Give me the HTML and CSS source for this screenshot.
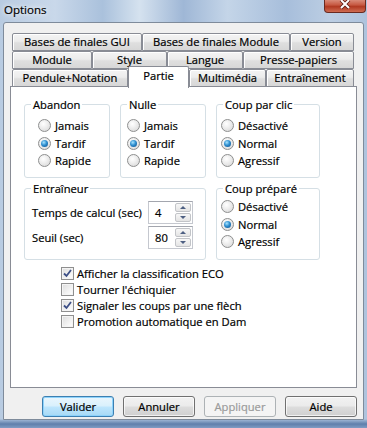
FILE: index.html
```html
<!DOCTYPE html>
<html lang="fr">
<head>
    <meta charset="UTF-8">
    <title>Options</title>
    <link rel="stylesheet" href="styles.css">
</head>
<body>
<div class="window">
    <div class="titlebar">
        <span class="title">Options</span>
        <div class="close">
            <svg width="14" height="10" viewBox="0 0 14 10">
                <path d="M3 0 L11 8 M11 0 L3 8" stroke="#5a1a12" stroke-width="3.6"/>
                <path d="M3 0 L11 8 M11 0 L3 8" stroke="#fff" stroke-width="2"/>
            </svg>
        </div>
    </div>

    <div class="client">
        <div class="tabs">
            <div class="tab-row">
                <div class="tab gui">Bases de finales GUI</div>
                <div class="tab mod-bases">Bases de finales Module</div>
                <div class="tab version">Version</div>
            </div>
            <div class="tab-row">
                <div class="tab module">Module</div>
                <div class="tab style">Style</div>
                <div class="tab langue">Langue</div>
                <div class="tab presse">Presse-papiers</div>
            </div>
            <div class="tab-row last">
                <div class="tab pendule">Pendule+Notation</div>
                <div class="tab partie active">Partie</div>
                <div class="tab multi">Multimédia</div>
                <div class="tab entr">Entraînement</div>
            </div>
        </div>

        <div class="panel">
            <div class="groups">
                <fieldset class="group abandon">
                    <legend>Abandon</legend>
                    <div class="opts">
                        <div class="opt"><span class="radio"></span>Jamais</div>
                        <div class="opt"><span class="radio on"></span>Tardif</div>
                        <div class="opt"><span class="radio"></span>Rapide</div>
                    </div>
                </fieldset>
                <fieldset class="group nulle">
                    <legend>Nulle</legend>
                    <div class="opts">
                        <div class="opt"><span class="radio"></span>Jamais</div>
                        <div class="opt"><span class="radio on"></span>Tardif</div>
                        <div class="opt"><span class="radio"></span>Rapide</div>
                    </div>
                </fieldset>
                <fieldset class="group clic">
                    <legend>Coup par clic</legend>
                    <div class="opts">
                        <div class="opt"><span class="radio"></span>Désactivé</div>
                        <div class="opt"><span class="radio on"></span>Normal</div>
                        <div class="opt"><span class="radio"></span>Agressif</div>
                    </div>
                </fieldset>

                <fieldset class="group trainer">
                    <legend>Entraîneur</legend>
                    <div class="train">
                        <span>Temps de calcul (sec)</span>
                        <div class="spin">
                            <span class="val">4</span>
                            <span class="arrows"><span class="up"></span><span class="down"></span></span>
                        </div>
                        <span>Seuil (sec)</span>
                        <div class="spin">
                            <span class="val">80</span>
                            <span class="arrows"><span class="up"></span><span class="down"></span></span>
                        </div>
                    </div>
                </fieldset>
                <fieldset class="group prepare">
                    <legend>Coup préparé</legend>
                    <div class="opts">
                        <div class="opt"><span class="radio"></span>Désactivé</div>
                        <div class="opt"><span class="radio on"></span>Normal</div>
                        <div class="opt"><span class="radio"></span>Agressif</div>
                    </div>
                </fieldset>
            </div>

            <div class="checks">
                <div class="chk"><span class="box on"><svg width="11" height="11" viewBox="0 0 11 11"><path d="M2 5.5 L4.5 8 L9 2" fill="none" stroke="#3d4f86" stroke-width="1.8"/></svg></span>Afficher la classification ECO</div>
                <div class="chk"><span class="box"></span>Tourner l'échiquier</div>
                <div class="chk"><span class="box on"><svg width="11" height="11" viewBox="0 0 11 11"><path d="M2 5.5 L4.5 8 L9 2" fill="none" stroke="#3d4f86" stroke-width="1.8"/></svg></span>Signaler les coups par une flèch</div>
                <div class="chk"><span class="box"></span>Promotion automatique en Dam</div>
            </div>
        </div>

        <div class="buttons">
            <button class="btn default">Valider</button>
            <button class="btn">Annuler</button>
            <button class="btn" disabled>Appliquer</button>
            <button class="btn">Aide</button>
        </div>
    </div>
</div>
</body>
</html>
```

FILE: styles.css
```css
body {
    margin: 0;
    width: 367px;
    height: 428px;
    overflow: hidden;
    font-family: "Open Sans", sans-serif;
    font-size: 11.2px;
    color: #000;
    -webkit-text-stroke: 0.2px currentColor;
}
.window {
    height: 428px;
    box-sizing: border-box;
    padding: 0 3px 8px;
    display: flex;
    flex-direction: column;
    background:
        linear-gradient(to bottom, transparent 419px, #9bb3d2 420px, #5f7fab 424px, #7f9cc4 428px),
        linear-gradient(90deg, #b8cbe1 0%, #c9d8ea 15%, #aac1dc 28%, #d5e2ef 38%, #9fb7d6 50%, #c4d5e8 62%, #a7bedb 78%, #bccee3 90%, #aec3dd 100%);
}
.titlebar {
    height: 22px;
    display: flex;
    justify-content: space-between;
    align-items: flex-start;
}
.title {
    padding: 2px 0 0 1px;
    line-height: 15px;
    font-size: 11.5px;
    text-shadow: 0 0 5px #fff, 0 0 8px rgba(255, 255, 255, 0.8);
}
.close {
    width: 42px;
    height: 13px;
    margin-right: -2px;
    box-sizing: border-box;
    border: 1px solid #6a2a20;
    border-top: none;
    border-radius: 0 0 4px 4px;
    background: linear-gradient(#d98a78, #c75a43 40%, #b13a22 55%, #cf6c52);
    display: flex;
    justify-content: center;
    align-items: flex-start;
}
.client {
    flex: 1;
    background: #f0f0f0;
    border: 1px solid #7e8b9b;
    border-radius: 3px 3px 0 0;
    padding: 10px 6px 0;
}

/* onglets */
.tabs {
    margin: 0 2px;
}
.tab-row {
    display: flex;
}
.tab-row.last {
    margin-bottom: -1px;
}
.tab {
    box-sizing: border-box;
    height: 18px;
    border: 1px solid #898c95;
    border-radius: 2px 2px 0 0;
    background: linear-gradient(#f4f4f4, #ececec 45%, #dfdfdf 55%, #d7d7d7);
    box-shadow: inset 1px 1px 0 #fff;
    text-align: center;
    line-height: 16px;
    white-space: nowrap;
}
.tab.active {
    position: relative;
    z-index: 1;
    height: 22px;
    margin-top: -3px;
    margin-bottom: -1px;
    border-bottom: none;
    background: #fff;
    box-shadow: none;
    line-height: 17px;
}
.gui { width: 130px; }
.mod-bases { width: 148px; }
.version { width: 64px; }
.module { width: 80px; }
.style { width: 75px; }
.langue { width: 76px; }
.presse { width: 111px; }
.pendule { width: 116px; }
.partie { width: 61px; }
.multi { width: 77px; }
.entr { width: 88px; }

.panel {
    height: 302px;
    box-sizing: border-box;
    border: 1px solid #898c95;
    background: #fff;
    padding: 10px 0 0 13px;
}

/* groupes */
.groups {
    display: grid;
    grid-template-columns: 86px 86px 104px;
    column-gap: 10px;
    row-gap: 3px;
}
fieldset.group {
    margin: 0;
    padding: 0;
    min-width: 0;
    border: 1px solid #d5dfe5;
    border-radius: 3px;
}
legend {
    margin-left: 6px;
    padding: 0 2px;
    line-height: 15px;
}
.opts {
    padding: 5px 0 7.5px;
}
.abandon .opts { padding-left: 13px; }
.nulle .opts { padding-left: 6px; }
.clic .opts { padding-left: 4px; }
.prepare .opts { padding: 2px 0 8px 4px; }
.opt {
    display: flex;
    align-items: center;
    gap: 4px;
    height: 17.5px;
}
.radio {
    width: 13px;
    height: 13px;
    box-sizing: border-box;
    border-radius: 50%;
    border: 1px solid #8e8f8f;
    background: radial-gradient(circle at 40% 35%, #ffffff 0%, #f1f1f1 35%, #d4d4d4 100%);
    display: flex;
    align-items: center;
    justify-content: center;
}
.radio.on::after {
    content: "";
    width: 7px;
    height: 7px;
    border-radius: 50%;
    background: radial-gradient(circle at 40% 35%, #a8e4ff 0%, #2f8fd0 45%, #0c4a86 100%);
}

.trainer {
    grid-column: span 2;
}
.train {
    display: grid;
    grid-template-columns: 116px 45px;
    row-gap: 2px;
    align-items: center;
    padding: 4.5px 0 10px 7px;
}
.spin {
    width: 45px;
    height: 23px;
    box-sizing: border-box;
    border: 1px solid #c5c8cf;
    border-top-color: #a3a6ae;
    background: #fff;
    display: flex;
}
.val {
    flex: 1;
    padding-left: 6px;
    line-height: 21px;
}
.arrows {
    width: 16px;
    margin: 1px 1px 1px 0;
    display: flex;
    flex-direction: column;
    gap: 1px;
}
.arrows span {
    flex: 1;
    border: 1px solid #c2c4c8;
    border-radius: 2px;
    background: linear-gradient(#f7f7f7, #e4e4e4);
    display: flex;
    align-items: center;
    justify-content: center;
}
.arrows .up::after {
    content: "";
    border: 3px solid transparent;
    border-top: none;
    border-bottom: 3px solid #4d5f82;
}
.arrows .down::after {
    content: "";
    border: 3px solid transparent;
    border-bottom: none;
    border-top: 3px solid #4d5f82;
}

/* cases a cocher */
.checks {
    margin: 6px 0 0 37px;
}
.chk {
    display: flex;
    align-items: center;
    gap: 3px;
    height: 16px;
    white-space: nowrap;
}
.box {
    width: 13px;
    height: 13px;
    box-sizing: border-box;
    border: 1px solid #8f8f8f;
    background: linear-gradient(135deg, #dcdcdc, #f6f6f6 70%, #fff);
    box-shadow: inset 0 0 0 1px #f4f4f4;
    display: flex;
    align-items: center;
    justify-content: center;
}

/* boutons */
.buttons {
    display: flex;
    justify-content: flex-end;
    gap: 9px;
    margin-top: 8px;
}
.btn {
    width: 72px;
    height: 21px;
    padding: 0;
    font-family: inherit;
    font-size: inherit;
    color: #000;
    border: 1px solid #707070;
    border-radius: 3px;
    background: linear-gradient(#f2f2f2, #ebebeb 48%, #dddddd 52%, #cfcfcf);
    box-shadow: inset 0 0 0 1px rgba(255, 255, 255, 0.7);
}
.btn.default {
    border-color: #3c7fb1;
    background: linear-gradient(#eaf6fd, #d9f0fc 48%, #bee6fd 52%, #a7d9f5);
    box-shadow: inset 0 0 0 1px #8ed3fb;
}
.btn:disabled {
    color: #9a9a9a;
    border-color: #adb2b5;
    background: #f4f4f4;
    box-shadow: none;
}
```
